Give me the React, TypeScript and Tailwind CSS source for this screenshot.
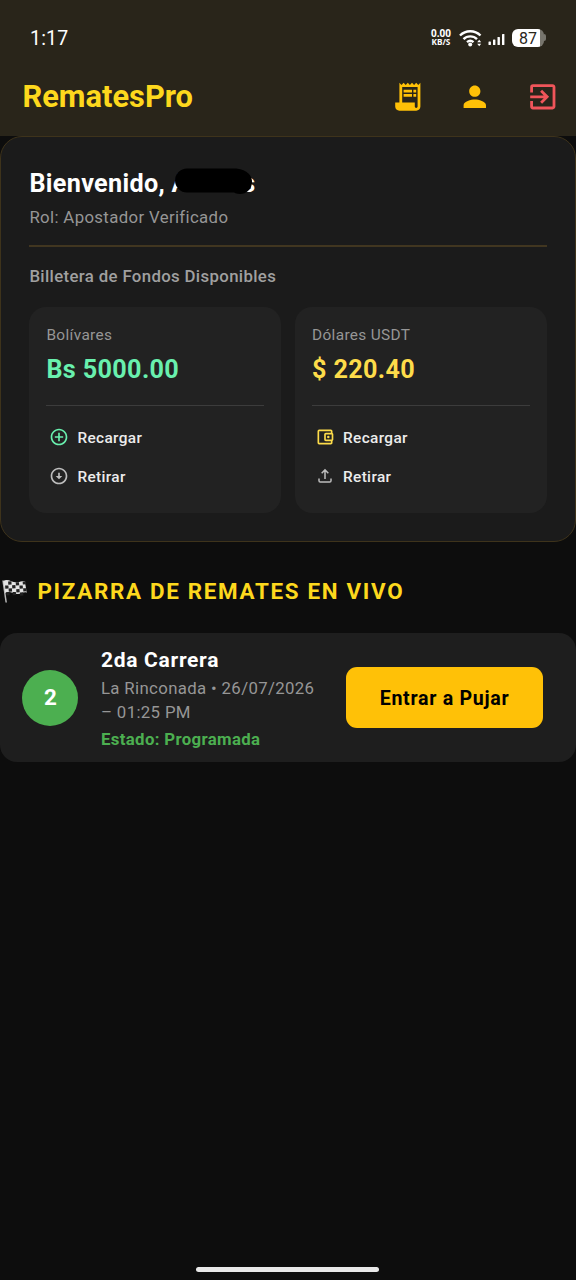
import type { ReactNode } from 'react'
import {
  MdAddCircleOutline,
  MdExitToApp,
  MdOutlineAccountBalanceWallet,
  MdOutlineArrowCircleDown,
  MdPerson,
  MdReceiptLong,
} from 'react-icons/md'

const UploadIcon = () => (
  <svg width="20" height="20" viewBox="0 0 24 24" fill="none" stroke="currentColor" strokeWidth="1.8">
    <path d="M12 15.500V5M8 8.700 12 4.700l4 4M4.800 15v2.600q0 1.500 1.500 1.500h11.400q1.500 0 1.500-1.500V15" />
  </svg>
)

const flagSquares = [
  [6.5, 3.2], [14, 4.5], [21, 4],
  [3.2, 7], [10.2, 7.2], [17.5, 8],
  [6.5, 10.2], [14, 11.5], [21, 11],
  [3.8, 13.7], [10.2, 14], [17.5, 15],
]

const RaceFlag = () => (
  <svg width="26" height="26" viewBox="0 0 26 26" className="shrink-0">
    <path d="M1 2.500 4.200 24.500" stroke="#b9b9b9" strokeWidth="1.500" />
    <path d="M1.200 3c5-3 9 2 14 1.200 3.500-.4 5.500-1.800 7.600-1l2 11.500c-3-1.400-5 1.300-9 1.300-5 0-8-4-12.600-1z" fill="#e4e4e4" />
    <g transform="rotate(-4 12 9)" fill="#222">
      {flagSquares.map(([x, y]) => (
        <rect key={`${x}-${y}`} x={x} y={y} width="3.300" height="3.200" />
      ))}
    </g>
  </svg>
)

const StatusBar = () => (
  <div className="flex h-[58px] items-center justify-between pt-[17px] pr-[30px] pl-[30px] text-white">
    <span className="pt-[2px] text-[19.500px] leading-[20px] tracking-[0.200px]">1:17</span>
    <div className="flex items-center">
      <div className="flex w-[22px] flex-col items-center gap-px font-['Noto_Sans'] font-bold">
        <span className="text-[10px] leading-[8px]">0.00</span>
        <span className="text-[8.200px] leading-[8px]">KB/S</span>
      </div>
      <svg width="24" height="20" viewBox="0 0 24 20" className="ml-[7px]" fill="none" stroke="#fff" strokeWidth="2.400">
        <path d="M1 7.500a14.500 14.500 0 0 1 20.500 0M4.500 11.200a9.500 9.500 0 0 1 13.500 0M8 14.200a5 5 0 0 1 6.500 0" />
        <circle cx="11.200" cy="16.500" r="2" fill="#fff" stroke="none" />
        <path d="M18.200 14.300 20.200 11.800l2 2.500zM18.200 15.800l2 2.500 2-2.500z" fill="#fff" stroke="none" />
      </svg>
      <svg width="18" height="14" viewBox="0 0 18 14" className="ml-[5px] mt-[2px]" fill="#fff">
        <rect x="0.500" y="9.500" width="2.400" height="3.500" rx="0.600" />
        <rect x="5" y="7.500" width="2.400" height="5.500" rx="0.600" />
        <rect x="9.500" y="5" width="2.400" height="8" rx="0.600" />
        <rect x="14" y="2" width="2.400" height="11" rx="0.600" />
      </svg>
      <div className="ml-[6px] flex items-center">
        <div className="flex h-[18px] w-[32px] items-center justify-center rounded-[6px] bg-gradient-to-r from-white from-[88%] to-[#77756d] to-[88%] pt-[2px] text-[16px] leading-[18px] text-[#29251a]">
          87
        </div>
        <div className="h-[7px] w-[2px] rounded-r-[2px] bg-[#77756d]" />
      </div>
    </div>
  </div>
)

const AppBar = () => (
  <div className="flex h-[78px] items-center justify-between pl-[22.500px]">
    <h1 className="text-[30.800px] font-bold text-[#fdd81d]">RematesPro</h1>
    <div className="flex text-[33.600px]">
      <button className="flex w-[67.200px] justify-center text-[#ffc107]"><MdReceiptLong /></button>
      <button className="flex w-[67.200px] justify-center text-[#ffc107]"><MdPerson /></button>
      <button className="flex w-[67.200px] justify-center text-[#f0555a]"><MdExitToApp /></button>
    </div>
  </div>
)

const Action = ({ icon, label }: { icon: ReactNode; label: string }) => (
  <button className="flex h-[39px] items-center gap-[8px] pl-[3px]">
    <span className="pb-px">{icon}</span>
    <span className="pt-[2px] text-[15.400px] font-medium tracking-[0.350px] text-[#ececec]">{label}</span>
  </button>
)

const Wallet = ({ label, amount, children }: { label: string; amount: ReactNode; children: ReactNode }) => (
  <div className="flex h-[206px] flex-1 flex-col rounded-[17px] bg-[#222222] px-[17px] pt-[18px]">
    <span className="text-[15.400px] leading-[20px] tracking-[0.350px] text-[#969696]">{label}</span>
    <span className="mt-[10px] text-[25.200px] leading-[30px] font-bold tracking-[0.350px]">{amount}</span>
    <div className="mt-[20px] mb-[12px] h-px bg-[#3c3c3c]" />
    {children}
  </div>
)

export default function App() {
  return (
    <div className="flex h-[1280px] w-[576px] flex-col overflow-hidden bg-[#0d0d0d] font-[Roboto,sans-serif]">
      <header className="bg-[#29251a]">
        <StatusBar />
        <AppBar />
      </header>

      <section className="flex h-[406px] flex-col rounded-[22px] border border-[#3e331b] bg-[#1b1b1b] px-[28.400px] pt-[32px]">
        <h2 className="text-[25.200px] leading-[30px] font-bold tracking-[0.320px] text-white">
          Bienvenido,{' '}
          <span className="relative">
            A.......s
            <svg className="absolute top-[-1px] left-0" width="84" height="30" viewBox="0 0 84 30">
              <path d="M15 12.500H63Q67 13 68 14" stroke="#000" strokeWidth="24" strokeLinecap="round" fill="none" />
            </svg>
          </span>
        </h2>
        <p className="mt-[8px] text-[16.800px] leading-[20px] tracking-[0.350px] text-[#969696]">Rol: Apostador Verificado</p>
        <div className="mt-[18px] h-[2px] bg-[#413620]" />
        <h3 className="mt-[19px] text-[16.800px] leading-[20px] font-medium tracking-[0.350px] text-[#a0a0a0]">
          Billetera de Fondos Disponibles
        </h3>
        <div className="mt-[21px] flex gap-[14px]">
          <Wallet label="Bolívares" amount={<span className="text-[#69f0ae]">Bs 5000.00</span>}>
            <Action icon={<MdAddCircleOutline className="text-[20px] text-[#69f0ae]" />} label="Recargar" />
            <Action icon={<MdOutlineArrowCircleDown className="text-[20px] text-[#bdbdbd]" />} label="Retirar" />
          </Wallet>
          <Wallet label="Dólares USDT" amount={<span className="text-[#fddc4a]">$ 220.40</span>}>
            <Action icon={<MdOutlineAccountBalanceWallet className="text-[20px] text-[#fddc4a]" />} label="Recargar" />
            <Action icon={<span className="text-[#bdbdbd]"><UploadIcon /></span>} label="Retirar" />
          </Wallet>
        </div>
      </section>

      <div className="mt-[34px] flex h-[30px] items-center gap-[10px] pl-[1.500px]">
        <RaceFlag />
        <h2 className="text-[22.400px] leading-[30px] font-bold tracking-[1.680px] text-[#fdd81d]">
          PIZARRA DE REMATES EN VIVO
        </h2>
      </div>

      <section className="mt-[27px] flex h-[129px] items-center rounded-[17px] bg-[#1e1e1e] pr-[33px] pl-[22.400px]">
        <div className="flex size-[56px] shrink-0 items-center justify-center rounded-full bg-[#4caf50] text-[22.400px] font-bold text-white">
          2
        </div>
        <div className="ml-[22.600px] w-[222px] pt-[2px]">
          <h3 className="text-[21px] leading-[26px] font-bold tracking-[0.700px] text-white">2da Carrera</h3>
          <p className="mt-[3px] text-[16.800px] leading-[24px] tracking-[0.350px] text-[#969696]">
            La Rinconada • 26/07/2026<br />– 01:25 PM
          </p>
          <p className="mt-[4px] text-[16.800px] leading-[22px] font-bold tracking-[0.350px] text-[#4caf50]">Estado: Programada</p>
        </div>
        <button className="ml-auto h-[61px] w-[197px] rounded-[11px] bg-[#ffc107] pt-[2px] text-[19.600px] font-bold tracking-[0.700px] text-black">
          Entrar a Pujar
        </button>
      </section>

      <div className="mt-auto mb-[8px] ml-[196px] h-[5px] w-[183px] rounded-full bg-[#e8e8e8]" />
    </div>
  )
}
